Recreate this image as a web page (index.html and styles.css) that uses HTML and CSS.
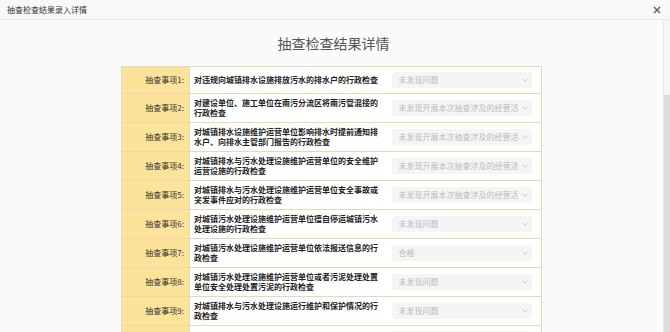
FILE: index.html
```html
<!DOCTYPE html>
<html lang="zh">
<head>
<meta charset="utf-8">
<link rel="stylesheet" href="styles.css">
</head>
<body>
<div class="dialog">
  <div class="titlebar">
    <span class="title">抽查检查结果录入详情</span>
    <svg class="close" width="8" height="8" viewBox="0 0 8 8"><path d="M1 1L7 7M7 1L1 7" stroke="#555" stroke-width="1.3"/></svg>
  </div>
  <div class="body">
    <div class="main">
      <h1 class="heading">抽查检查结果详情</h1>
      <table class="grid">
        <colgroup><col class="c-label"><col class="c-text"><col class="c-sel"></colgroup>
        <tr><th>抽查事项1:</th><td class="txt">对违规向城镇排水设施排放污水的排水户的行政检查</td><td class="sel"><div class="select"><span>未发现问题</span><svg width="6" height="4" viewBox="0 0 6 4"><path d="M0.5 0.8L3 3.2L5.5 0.8" fill="none" stroke="#bbb" stroke-width="0.8"/></svg></div></td></tr>
        <tr><th>抽查事项2:</th><td class="txt">对建设单位、施工单位在雨污分流区将雨污管混接的行政检查</td><td class="sel"><div class="select"><span>未发现开展本次抽查涉及的经营活动</span><svg width="6" height="4" viewBox="0 0 6 4"><path d="M0.5 0.8L3 3.2L5.5 0.8" fill="none" stroke="#bbb" stroke-width="0.8"/></svg></div></td></tr>
        <tr><th>抽查事项3:</th><td class="txt">对城镇排水设施维护运营单位影响排水时提前通知排水户、向排水主管部门报告的行政检查</td><td class="sel"><div class="select"><span>未发现开展本次抽查涉及的经营活动</span><svg width="6" height="4" viewBox="0 0 6 4"><path d="M0.5 0.8L3 3.2L5.5 0.8" fill="none" stroke="#bbb" stroke-width="0.8"/></svg></div></td></tr>
        <tr><th>抽查事项4:</th><td class="txt">对城镇排水与污水处理设施维护运营单位的安全维护运营设施的行政检查</td><td class="sel"><div class="select"><span>未发现开展本次抽查涉及的经营活动</span><svg width="6" height="4" viewBox="0 0 6 4"><path d="M0.5 0.8L3 3.2L5.5 0.8" fill="none" stroke="#bbb" stroke-width="0.8"/></svg></div></td></tr>
        <tr><th>抽查事项5:</th><td class="txt">对城镇排水与污水处理设施维护运营单位安全事故或突发事件应对的行政检查</td><td class="sel"><div class="select"><span>未发现开展本次抽查涉及的经营活动</span><svg width="6" height="4" viewBox="0 0 6 4"><path d="M0.5 0.8L3 3.2L5.5 0.8" fill="none" stroke="#bbb" stroke-width="0.8"/></svg></div></td></tr>
        <tr><th>抽查事项6:</th><td class="txt">对城镇污水处理设施维护运营单位擅自停运城镇污水处理设施的行政检查</td><td class="sel"><div class="select"><span>未发现问题</span><svg width="6" height="4" viewBox="0 0 6 4"><path d="M0.5 0.8L3 3.2L5.5 0.8" fill="none" stroke="#bbb" stroke-width="0.8"/></svg></div></td></tr>
        <tr><th>抽查事项7:</th><td class="txt">对城镇污水处理设施维护运营单位依法报送信息的行政检查</td><td class="sel"><div class="select"><span>合格</span><svg width="6" height="4" viewBox="0 0 6 4"><path d="M0.5 0.8L3 3.2L5.5 0.8" fill="none" stroke="#bbb" stroke-width="0.8"/></svg></div></td></tr>
        <tr><th>抽查事项8:</th><td class="txt">对城镇污水处理设施维护运营单位或者污泥处理处置单位安全处理处置污泥的行政检查</td><td class="sel"><div class="select"><span>未发现问题</span><svg width="6" height="4" viewBox="0 0 6 4"><path d="M0.5 0.8L3 3.2L5.5 0.8" fill="none" stroke="#bbb" stroke-width="0.8"/></svg></div></td></tr>
        <tr><th>抽查事项9:</th><td class="txt">对城镇排水与污水处理设施运行维护和保护情况的行政检查</td><td class="sel"><div class="select"><span>未发现问题</span><svg width="6" height="4" viewBox="0 0 6 4"><path d="M0.5 0.8L3 3.2L5.5 0.8" fill="none" stroke="#bbb" stroke-width="0.8"/></svg></div></td></tr>
        <tr><th>抽查事项10:</th><td class="txt">对城镇排水与污水处理设施维护运营单位的行政检查</td><td class="sel"><div class="select"><span>未发现问题</span><svg width="6" height="4" viewBox="0 0 6 4"><path d="M0.5 0.8L3 3.2L5.5 0.8" fill="none" stroke="#bbb" stroke-width="0.8"/></svg></div></td></tr>
      </table>
    </div>
    <div class="scrollbar"><div class="thumb"></div></div>
  </div>
</div>
</body>
</html>
```
FILE: styles.css
```css
html, body {
  margin: 0;
  padding: 0;
  width: 670px;
  height: 332px;
  overflow: hidden;
  background: #fafafa;
  font-family: "Noto Sans CJK SC", "Noto Sans", sans-serif;
}
.dialog {
  display: flex;
  flex-direction: column;
  height: 332px;
}
.titlebar {
  height: 19px;
  flex: none;
  display: flex;
  align-items: center;
  justify-content: space-between;
  padding: 0 9px 0 7px;
  background: #f8f8f8;
  border-bottom: 1px solid #ececec;
}
.title {
  font-size: 8px;
  color: #333;
  line-height: 10px;
}
.close {
  display: block;
}
.body {
  flex: 1;
  display: flex;
  min-height: 0;
}
.main {
  flex: 1;
  overflow: hidden;
  background: #fafafa;
}
.heading {
  margin: 14px 0 0 0;
  height: 32px;
  font-size: 14px;
  line-height: 18px;
  font-weight: normal;
  color: #555;
  text-align: center;
  padding-left: 4px;
}
.grid {
  margin: 0 auto 0 121px;
  width: 420px;
  border-collapse: collapse;
  table-layout: fixed;
  background: #fff;
}
.c-label { width: 68px; }
.c-text { width: 197px; }
.c-sel { width: 155px; }
.grid th, .grid td {
  border-top: 1px solid #ead8b4;
  border-bottom: 1px solid #ead8b4;
  vertical-align: middle;
}
.grid th {
  background: #fce39a;
  font-weight: normal;
  font-size: 8px;
  line-height: 10px;
  color: #333;
  text-align: right;
  padding: 0 5px 0 0;
  border-left: 1px solid #ead8b4;
  border-right: 1px solid #ead8b4;
  white-space: nowrap;
}
.grid td.txt {
  font-size: 8px;
  line-height: 10px;
  font-weight: bold;
  color: #222;
  padding: 4px 8px 4px 4px;
  word-break: break-all;
}
.grid td.sel {
  padding: 5px 9px 5px 5px;
  border-right: 1px solid #ead8b4;
}
.select {
  height: 16px;
  background: #f5f5f5;
  border-radius: 2px;
  display: flex;
  align-items: center;
  padding: 0 4px 0 7px;
  gap: 4px;
}
.select span {
  flex: 1;
  min-width: 0;
  overflow: hidden;
  white-space: nowrap;
  font-size: 8px;
  line-height: 10px;
  color: #bbb;
}
.select svg {
  flex: none;
  display: block;
}
.scrollbar {
  width: 6px;
  flex: none;
  background: #f6f6f6;
  border-left: 1px solid #ebebeb;
  display: flex;
  flex-direction: column;
}
.thumb {
  margin-top: 75px;
  flex: 1;
  background: #dcdcdc;
}
```
